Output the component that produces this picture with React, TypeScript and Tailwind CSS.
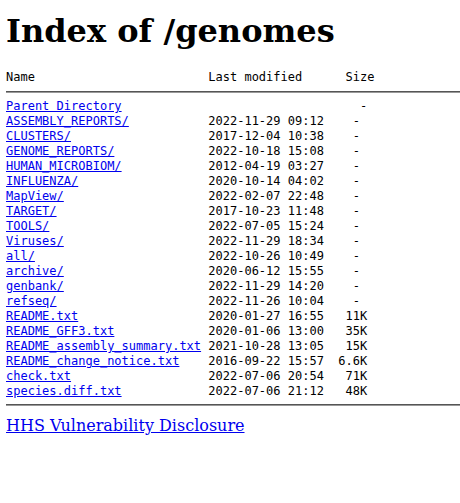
import React from 'react';

type Entry = { name: string; date: string; size: string };

const entries: Entry[] = [
  { name: 'ASSEMBLY_REPORTS/', date: '2022-11-29 09:12', size: '-' },
  { name: 'CLUSTERS/', date: '2017-12-04 10:38', size: '-' },
  { name: 'GENOME_REPORTS/', date: '2022-10-18 15:08', size: '-' },
  { name: 'HUMAN_MICROBIOM/', date: '2012-04-19 03:27', size: '-' },
  { name: 'INFLUENZA/', date: '2020-10-14 04:02', size: '-' },
  { name: 'MapView/', date: '2022-02-07 22:48', size: '-' },
  { name: 'TARGET/', date: '2017-10-23 11:48', size: '-' },
  { name: 'TOOLS/', date: '2022-07-05 15:24', size: '-' },
  { name: 'Viruses/', date: '2022-11-29 18:34', size: '-' },
  { name: 'all/', date: '2022-10-26 10:49', size: '-' },
  { name: 'archive/', date: '2020-06-12 15:55', size: '-' },
  { name: 'genbank/', date: '2022-11-29 14:20', size: '-' },
  { name: 'refseq/', date: '2022-11-26 10:04', size: '-' },
  { name: 'README.txt', date: '2020-01-27 16:55', size: '11K' },
  { name: 'README_GFF3.txt', date: '2020-01-06 13:00', size: '35K' },
  { name: 'README_assembly_summary.txt', date: '2021-10-28 13:05', size: '15K' },
  { name: 'README_change_notice.txt', date: '2016-09-22 15:57', size: '6.6K' },
  { name: 'check.txt', date: '2022-07-06 20:54', size: '71K' },
  { name: 'species.diff.txt', date: '2022-07-06 21:12', size: '48K' },
];

function Rule() {
  return <div className="h-[2px] w-[454px] border-t border-b border-t-[#555] border-b-[#999]" />;
}

export default function App() {
  return (
    <div className="min-h-[503px] bg-white px-[6px] pt-[11px] text-black">
      <h1 className="text-[32px] leading-[40px] font-bold font-['DejaVu_Serif',serif]">Index of /genomes</h1>
      <div className="mt-[19px] font-['DejaVu_Sans_Mono',monospace] text-[12px] leading-[15px] whitespace-pre">
        <div>{'Name'.padEnd(28) + 'Last modified'.padEnd(19) + 'Size'}</div>
        <div className="my-[6px]"><Rule /></div>
        <div>
          <a className="text-[#0000ee] underline">Parent Directory</a>
          {' '.repeat(33) + '-'}
        </div>
        {entries.map((e) => (
          <div key={e.name}>
            <a className="text-[#0000ee] underline">{e.name}</a>
            {' '.repeat(28 - e.name.length) + e.date + (e.size === '-' ? '    -   ' : '  ' + e.size.padStart(4))}
          </div>
        ))}
        <div className="mt-[5px] mb-[6px]"><Rule /></div>
      </div>
      <a className="mt-[8px] block text-[16px] leading-[24px] text-[#0000ee] underline font-['DejaVu_Serif',serif]">
        HHS Vulnerability Disclosure
      </a>
    </div>
  );
}
